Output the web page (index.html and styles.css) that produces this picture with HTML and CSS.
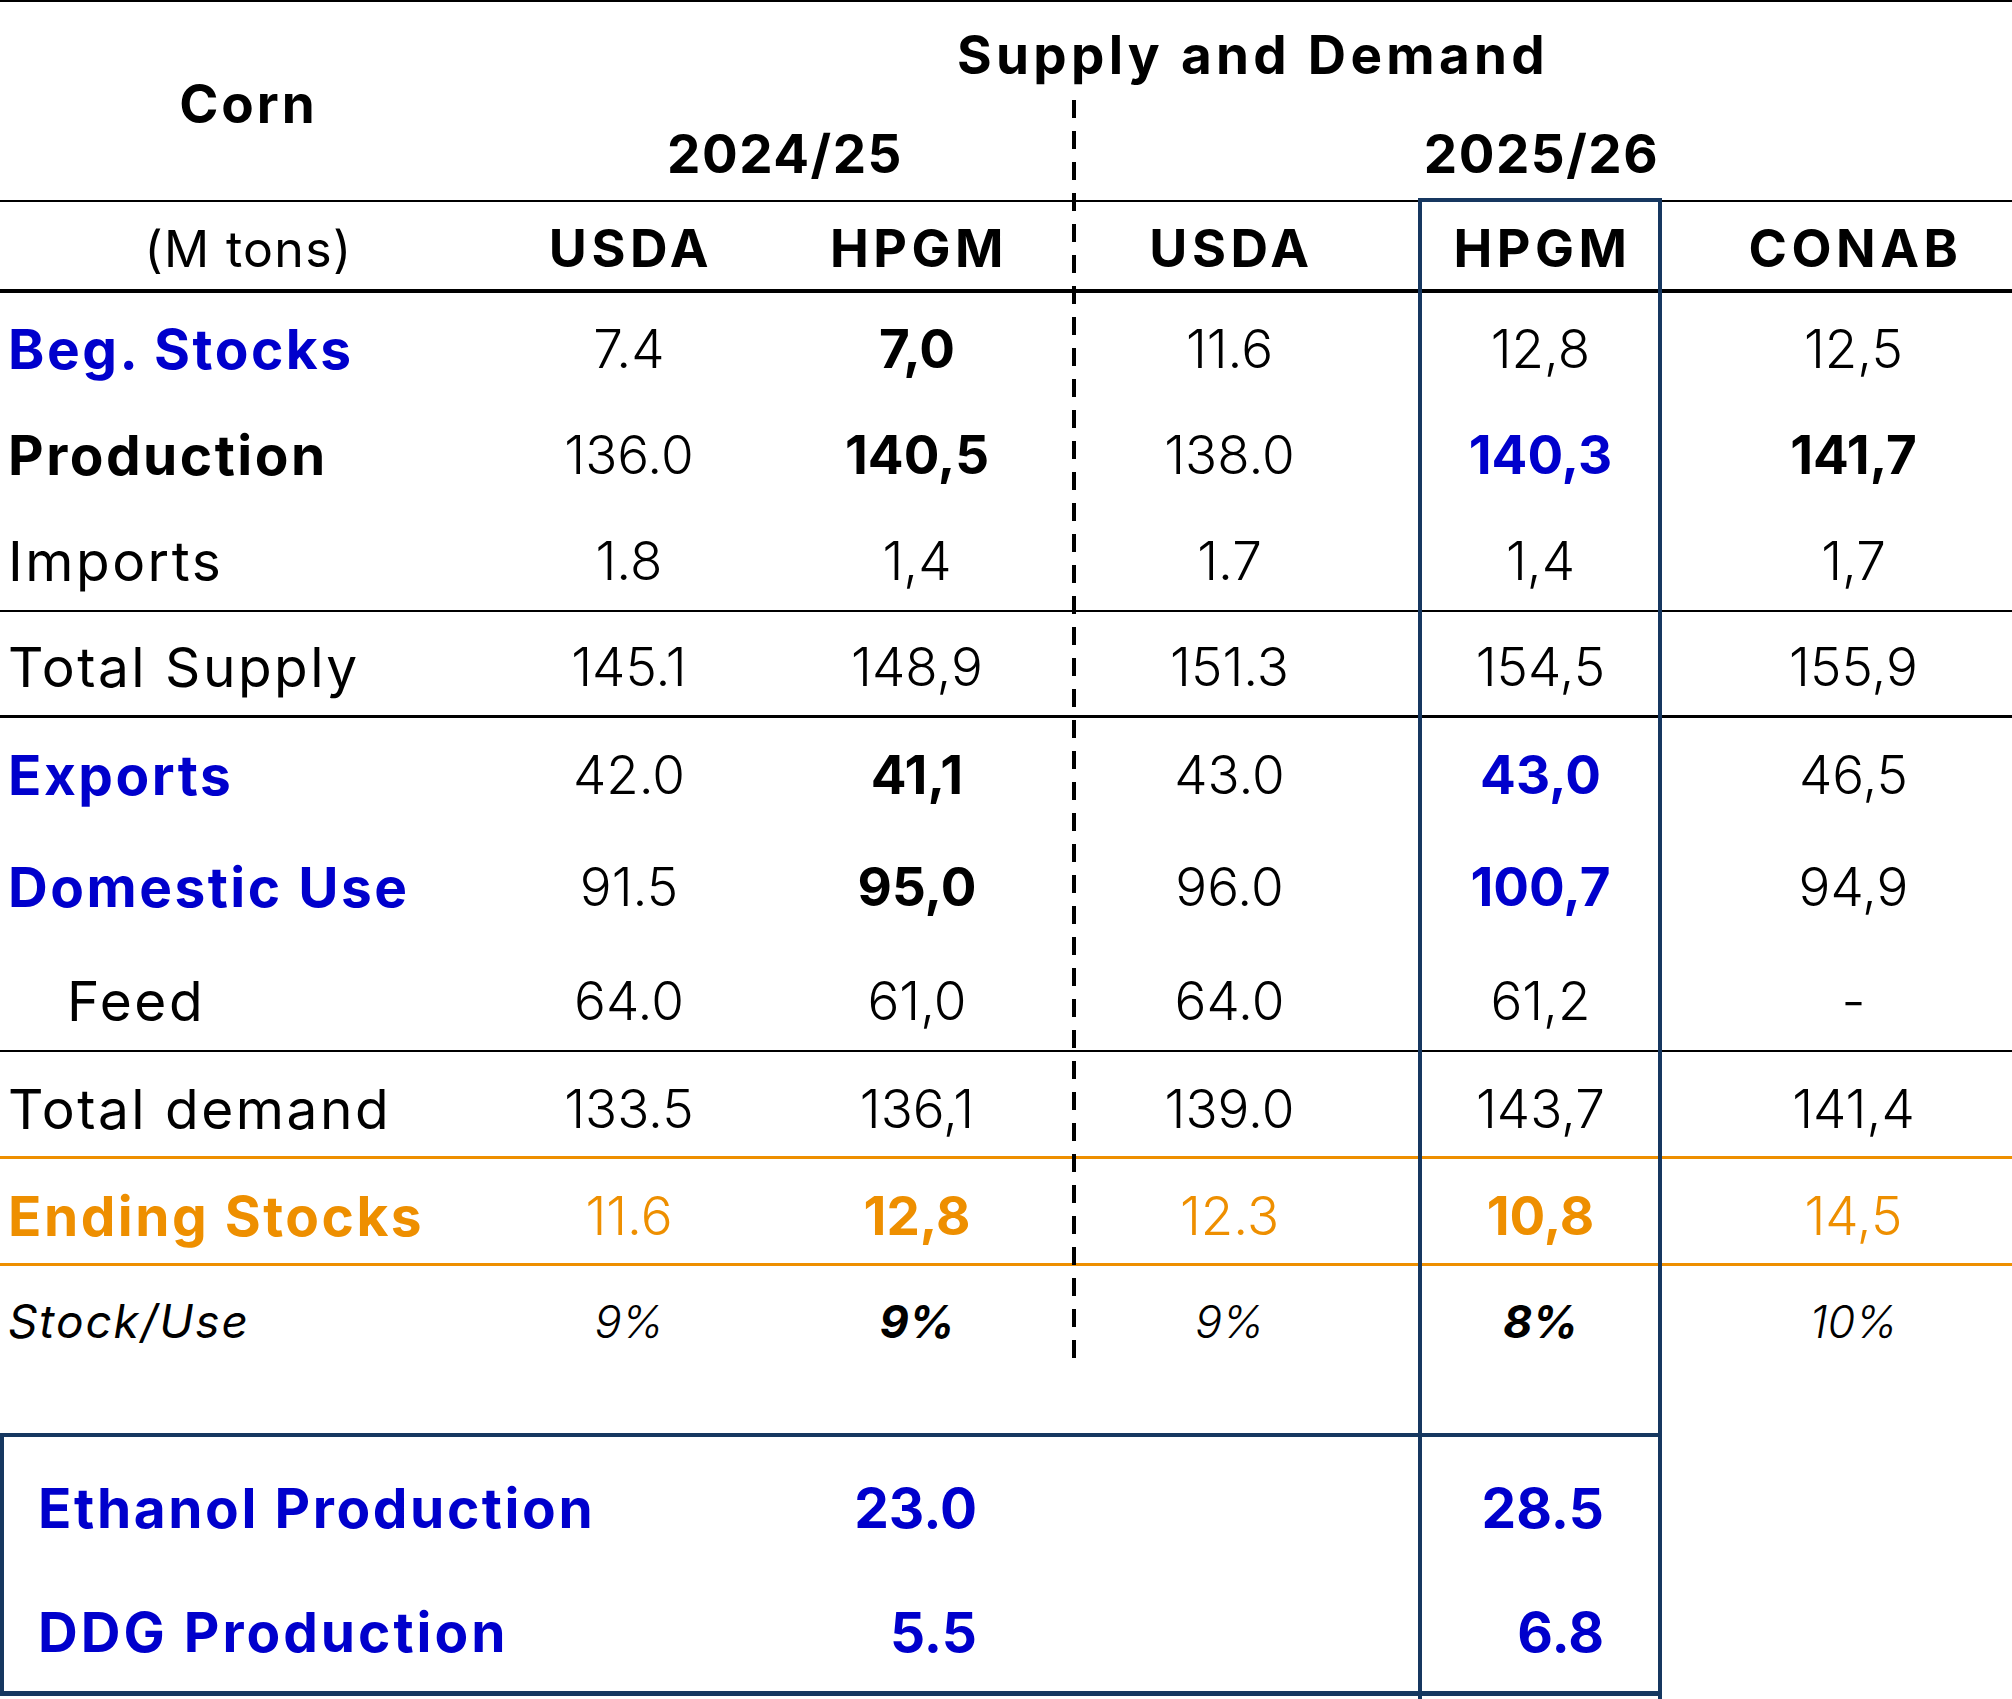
FILE: index.html
```html
<!DOCTYPE html>
<html lang="en">
<head>
<meta charset="utf-8">
<title>Corn Supply and Demand</title>
<link rel="stylesheet" href="styles.css">
</head>
<body>
<div class="sheet">
  <div class="head">
    <div class="corn">Corn</div>
    <div class="sd">Supply and Demand</div>
    <div class="yr yr1">2024/25</div>
    <div class="yr yr2">2025/26</div>
  </div>

  <div class="row colhead">
    <div class="lab units">(M tons)</div>
    <div class="c c1">USDA</div>
    <div class="c c2">HPGM</div>
    <div class="c c3">USDA</div>
    <div class="c c4">HPGM</div>
    <div class="c c5">CONAB</div>
  </div>

  <div class="row r-beg">
    <div class="lab b blue">Beg. Stocks</div>
    <div class="c c1 n">7.4</div>
    <div class="c c2 b">7,0</div>
    <div class="c c3 n">11.6</div>
    <div class="c c4 n">12,8</div>
    <div class="c c5 n">12,5</div>
  </div>
  <div class="row r-prod">
    <div class="lab b">Production</div>
    <div class="c c1 n">136.0</div>
    <div class="c c2 b">140,5</div>
    <div class="c c3 n">138.0</div>
    <div class="c c4 b blue">140,3</div>
    <div class="c c5 b">141,7</div>
  </div>
  <div class="row r-imp line-thin">
    <div class="lab">Imports</div>
    <div class="c c1 n">1.8</div>
    <div class="c c2 n">1,4</div>
    <div class="c c3 n">1.7</div>
    <div class="c c4 n">1,4</div>
    <div class="c c5 n">1,7</div>
  </div>
  <div class="row r-ts line-thick">
    <div class="lab">Total Supply</div>
    <div class="c c1 n">145.1</div>
    <div class="c c2 n">148,9</div>
    <div class="c c3 n">151.3</div>
    <div class="c c4 n">154,5</div>
    <div class="c c5 n">155,9</div>
  </div>

  <div class="row r-exp">
    <div class="lab b blue">Exports</div>
    <div class="c c1 n">42.0</div>
    <div class="c c2 b">41,1</div>
    <div class="c c3 n">43.0</div>
    <div class="c c4 b blue">43,0</div>
    <div class="c c5 n">46,5</div>
  </div>
  <div class="row r-dom">
    <div class="lab b blue">Domestic Use</div>
    <div class="c c1 n">91.5</div>
    <div class="c c2 b">95,0</div>
    <div class="c c3 n">96.0</div>
    <div class="c c4 b blue">100,7</div>
    <div class="c c5 n">94,9</div>
  </div>
  <div class="row r-feed line-thin">
    <div class="lab feed">Feed</div>
    <div class="c c1 n">64.0</div>
    <div class="c c2 n">61,0</div>
    <div class="c c3 n">64.0</div>
    <div class="c c4 n">61,2</div>
    <div class="c c5 n">-</div>
  </div>
  <div class="row r-td line-orange">
    <div class="lab">Total demand</div>
    <div class="c c1 n">133.5</div>
    <div class="c c2 n">136,1</div>
    <div class="c c3 n">139.0</div>
    <div class="c c4 n">143,7</div>
    <div class="c c5 n">141,4</div>
  </div>
  <div class="row r-end line-orange orange">
    <div class="lab b">Ending Stocks</div>
    <div class="c c1 n">11.6</div>
    <div class="c c2 b">12,8</div>
    <div class="c c3 n">12.3</div>
    <div class="c c4 b">10,8</div>
    <div class="c c5 n">14,5</div>
  </div>
  <div class="row r-su">
    <div class="lab it">Stock/Use</div>
    <div class="c c1 it n">9%</div>
    <div class="c c2 it b">9%</div>
    <div class="c c3 it n">9%</div>
    <div class="c c4 it b">8%</div>
    <div class="c c5 it n">10%</div>
  </div>

  <div class="extra">
    <div class="ex-row">
      <div class="ex-lab">Ethanol Production</div>
      <div class="ex-v1">23.0</div>
      <div class="ex-gap"></div>
      <div class="ex-v2">28.5</div>
    </div>
    <div class="ex-row">
      <div class="ex-lab ddg">DDG Production</div>
      <div class="ex-v1">5.5</div>
      <div class="ex-gap"></div>
      <div class="ex-v2">6.8</div>
    </div>
  </div>

  <div class="dash"></div>
  <div class="hl-box"></div>
</div>
</body>
</html>
```

FILE: styles.css
```css
html, body {
  margin: 0;
  padding: 0;
  background: #ffffff;
}
body {
  font-family: "Inter", "Liberation Sans", sans-serif;
  color: #000000;
}
.sheet {
  position: relative;
  width: 2012px;
  height: 1699px;
  overflow: hidden;
}

/* shared column template */
.head,
.row {
  display: grid;
  grid-template-columns: 485px 288px 288px 359px 241px 351px;
}

/* top header block */
.head {
  border-top: 2px solid #000;
  height: 198px;
  grid-template-rows: 100px 98px;
  font-weight: 700;
  font-size: 53px;
}
.head > div {
  display: flex;
  align-items: center;
  justify-content: center;
  padding-top: 6px;
  white-space: nowrap;
}
.corn {
  grid-column: 1;
  grid-row: 1 / span 2;
  padding-left: 12px;
  letter-spacing: 3px;
}
.sd {
  grid-column: 2 / span 5;
  grid-row: 1;
  padding-left: 9px;
  letter-spacing: 4.3px;
}
.yr { letter-spacing: 1.5px; }
.yr1 {
  grid-column: 2 / span 2;
  grid-row: 2;
  padding-left: 24px;
}
.yr2 {
  grid-column: 5;
  grid-row: 2;
  padding-left: 2px;
}

/* rows */
.row > div {
  display: flex;
  align-items: center;
  padding-top: 6px;
  white-space: nowrap;
}
.lab {
  padding-left: 8px;
  font-size: 55px;
  font-weight: 400;
  letter-spacing: 2.5px;
}
.c {
  justify-content: center;
  font-size: 53px;
}
.c3 { padding-right: 22px; }
.c5 { padding-left: 34px; }

.colhead {
  border-top: 2px solid #000;
  border-bottom: 4px solid #000;
  height: 87px;
  font-weight: 700;
  font-size: 52px;
}
.colhead .c {
  font-size: 52px;
  letter-spacing: 4.5px;
  padding-left: 4px;
}
.colhead .c3 { padding-left: 4px; padding-right: 22px; }
.colhead .c5 { padding-left: 38px; }
.colhead .units {
  font-weight: 400;
  font-size: 50px;
  justify-content: center;
  padding-left: 12px;
  letter-spacing: 1.3px;
}

.r-beg, .r-prod { height: 106px; }
.r-imp { height: 105px; }
.r-ts { height: 103px; }
.r-exp { height: 107px; }
.r-dom { height: 118px; }
.r-feed { height: 107px; }
.r-td { height: 104px; }
.r-end { height: 104px; }
.r-su { height: 104px; }

.r-feed > div, .r-td > div, .r-end > div { padding-top: 9px; }

.line-thin { border-bottom: 2px solid #000; }
.line-thick { border-bottom: 3px solid #000; }
.line-orange { border-bottom: 3px solid #ee8f00; }

.n { font-weight: 300; }
.b { font-weight: 700; }
.blue { color: #0000cc; }
.orange { color: #ee8f00; }
.feed { padding-left: 67px; }

.it { font-style: italic; font-size: 45px; }
.r-su .lab { font-size: 46px; letter-spacing: 1.9px; }

/* ethanol / ddg box */
.extra {
  box-sizing: border-box;
  width: 1662px;
  margin-top: 63px;
  border: 4px solid #163760;
  border-bottom-width: 5px;
  padding-top: 6px;
  color: #0000cc;
  font-weight: 700;
  font-size: 55px;
}
.ex-row {
  display: grid;
  grid-template-columns: 670px 303px 327px 300px;
  height: 124px;
  align-items: center;
}
.ex-row > div { padding-top: 6px; }
.ex-lab {
  padding-left: 34px;
  white-space: nowrap;
  letter-spacing: 2.6px;
}
.ex-lab.ddg { letter-spacing: 3px; }
.ex-v1, .ex-v2 { text-align: right; }

/* overlays */
.dash {
  position: absolute;
  left: 1072px;
  top: 100px;
  width: 4px;
  height: 1270px;
  background: repeating-linear-gradient(to bottom, #000 0, #000 18px, transparent 18px, transparent 31px);
}
.hl-box {
  position: absolute;
  left: 1418px;
  top: 198px;
  width: 244px;
  height: 1501px;
  box-sizing: border-box;
  border: 4px solid #163760;
  border-bottom: 0;
}
```
